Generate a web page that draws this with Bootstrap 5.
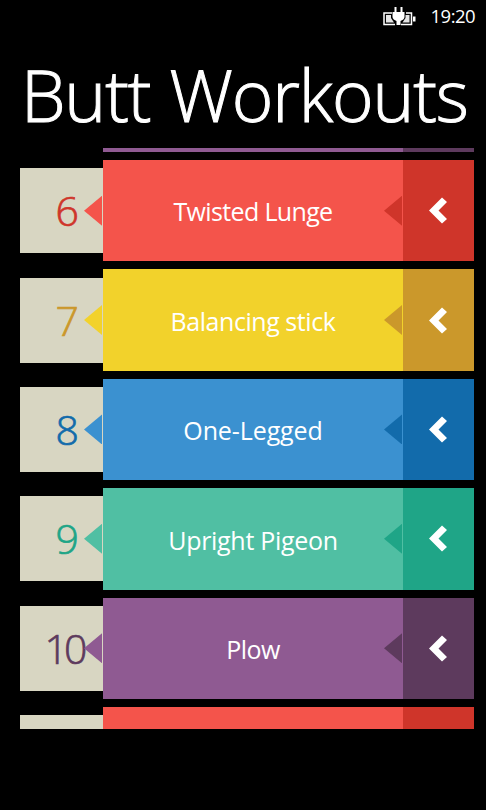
<!DOCTYPE html>
<html lang="en">
<head>
<meta charset="utf-8">
<meta name="viewport" content="width=device-width, initial-scale=1">
<title>Butt Workouts</title>
<link href="https://cdn.jsdelivr.net/npm/bootstrap@5.3.0/dist/css/bootstrap.min.css" rel="stylesheet">
<style>
body{background:#000;font-family:"Open Sans","Noto Sans",sans-serif}
.phone{width:486px;height:810px}
.status{height:31px;padding-right:11px;font-size:18.5px;letter-spacing:-.55px;gap:14px}
.page-title{height:117px;padding:21px 0 0 21px;font-size:71px;line-height:86px;font-weight:300;letter-spacing:-1.15px;word-spacing:2px;white-space:nowrap;-webkit-text-stroke:1px #fff}
.workouts{height:581px;padding:0 12px 0 20px}
.workout{height:101.4px;margin-bottom:8px}
.workout:first-child{margin-top:-97.4px}
.num{width:83px;height:85px;background:#d8d6c2;color:var(--deep);font-size:41px;font-weight:300;line-height:84px;padding-left:10px;letter-spacing:-1.5px;-webkit-text-stroke:.7px var(--deep)}
.plum .num{letter-spacing:-4px;padding-left:5px}
.label-box{width:300px;background:var(--main);font-size:25px;letter-spacing:var(--track);padding-top:3px}
.go{width:71px;background:var(--deep);padding-right:1px}
.tip{right:1px;top:50%;width:18px;height:30px;margin-top:-15px;clip-path:polygon(0 50%,100% 0,100% 100%)}
.tip-main{background:var(--main)}
.tip-deep{background:var(--deep)}
.red{--main:#f4544b;--deep:#cf352a;--track:-.65px}
.yellow{--main:#f2d22b;--deep:#cb982b;--track:-.45px}
.blue{--main:#3b91d0;--deep:#126bab;--track:-.1px}
.green{--main:#50bfa3;--deep:#1fa587;--track:-.3px}
.plum{--main:#8f5a92;--deep:#5d3a5d;--track:-.6px}
</style>
</head>
<body class="overflow-hidden">
<div class="phone text-white d-flex flex-column overflow-hidden">
  <div class="status d-flex justify-content-end align-items-center">
    <svg width="34" height="20" viewBox="0 0 34 20" fill="none"><path d="M9 7H1v11.500h11M23 7h5.500v11.500H18" stroke="#fff" stroke-width="1.5"/><path d="M3 9h5v3l3 4.500H3zM26.500 9h-4v3l-3 4.500h7z" fill="#e4e4e4"/><path d="M30 10.500h2.500v5H30z" fill="#fff"/><path d="M11.500 1h2v5h4V1h2v5h2v5c0 2-2 3-4 4v4h-4v-4c-2-1-4-2-4-4V6h2z" fill="#fff"/></svg>
    <span>19:20</span>
  </div>
  <h1 class="page-title m-0"><span>Butt Workouts</span></h1>
  <main class="workouts overflow-hidden" id="workouts"></main>
</div>
<script>
const items=[["","","plum"],[6,"Twisted Lunge","red"],[7,"Balancing stick","yellow"],[8,"One-Legged","blue"],[9,"Upright Pigeon","green"],[10,"Plow","plum"],["","","red"]];
document.getElementById("workouts").innerHTML=items.map(([n,t,c])=>`
<div class="workout ${c} d-flex align-items-center">
  <div class="num position-relative text-center"><span>${n}</span><i class="tip tip-main position-absolute"></i></div>
  <div class="label-box position-relative h-100 d-flex align-items-center justify-content-center"><span>${t}</span><i class="tip tip-deep position-absolute"></i></div>
  <div class="go h-100 d-flex align-items-center justify-content-center"><svg width="18" height="27" viewBox="0 0 18 27"><path d="M0 13.500 13 .5l5 4.500-8.500 8.500L18 22l-5 4.500z" fill="#fff"/></svg></div>
</div>`).join("");
</script>
<script src="https://cdn.jsdelivr.net/npm/bootstrap@5.3.0/dist/js/bootstrap.bundle.min.js"></script>
</body>
</html>
